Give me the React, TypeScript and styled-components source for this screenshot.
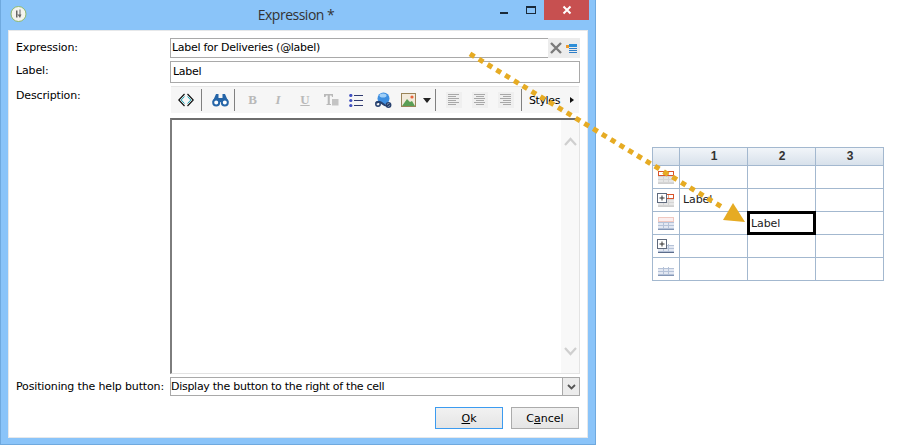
import React from "react";
import styled, { createGlobalStyle } from "styled-components";

const Global = createGlobalStyle`
  html, body { margin: 0; padding: 0; background: #fff; }
  body { font-family: "DejaVu Sans", "Noto Sans", sans-serif; font-size: 11px; color: #000; }
`;

const Page = styled.div`
  position: relative;
  width: 914px;
  height: 446px;
  display: flex;
  align-items: flex-start;
  overflow: hidden;
`;

const Window = styled.div`
  width: 596px;
  height: 445px;
  box-sizing: border-box;
  background: #8ac4f9;
  border: 1px solid #6fa9de;
  border-top: 0;
  display: flex;
  flex-direction: column;
  padding: 0 7px 7px 7px;
`;

const TitleBar = styled.div`
  height: 30px;
  flex: none;
  display: grid;
  grid-template-columns: 1fr auto 1fr;
  align-items: flex-start;
`;

const AppIcon = styled.div`
  width: 17px;
  height: 17px;
  margin: 6px 0 0 2px;
`;

const Title = styled.div`
  font-family: "Open Sans", sans-serif;
  font-size: 14px;
  letter-spacing: -0.5px;
  line-height: 30px;
  color: #333;
  position: relative;
  left: -2px;
`;

const Controls = styled.div`
  justify-self: end;
  margin-right: -1px;
  display: flex;
  align-items: flex-start;
`;

const Ctl = styled.div<{ $w: number }>`
  width: ${(p) => p.$w}px;
  height: 20px;
  display: flex;
  align-items: center;
  justify-content: center;
`;

const MinCtl = styled(Ctl)`
  align-items: flex-end;
  padding-bottom: 6px;
  box-sizing: border-box;
`;

const CloseCtl = styled(Ctl)`
  background: #c75050;
  margin-left: 3px;
`;

const Panel = styled.div`
  flex: 1;
  background: #fff;
  border: 1px solid #e6e8ea;
  display: grid;
  grid-template-columns: 161px 410px;
  grid-template-rows: 20px 22px 288px 19px 38px;
  row-gap: 3px;
  padding: 7px 0 0 0;
  box-sizing: border-box;
`;

const FieldLabel = styled.div`
  padding-left: 7px;
  line-height: 19px;
  white-space: nowrap;
  letter-spacing: -0.15px;
`;

const Inline = styled.div`
  display: flex;
`;

const Input = styled.div`
  flex: 1;
  height: 20px;
  box-sizing: border-box;
  border: 1px solid #a9a9a9;
  padding-left: 2px;
  line-height: 18px;
  white-space: nowrap;
  letter-spacing: -0.28px;
`;

const TopInput = styled(Input)`
  border-right: 0;
  padding-left: 1px;
`;

const LabelInput = styled(Input)`
  height: 22px;
  line-height: 19px;
`;

const FieldTools = styled.div`
  width: 32px;
  height: 20px;
  background: #ececec;
  display: flex;
  align-items: center;
  gap: 4px;
  padding-left: 2px;
  box-sizing: border-box;
`;

const EditorCol = styled.div`
  display: flex;
  flex-direction: column;
`;

const Toolbar = styled.div`
  height: 27px;
  margin: 0 0 5px 1px;
  padding-left: 1px;
  width: 408px;
  background: #f6f6f6;
  border-top: 1px solid #e6e6e6;
  box-sizing: border-box;
  display: flex;
  align-items: center;
`;

const Tool = styled.div<{ $w: number }>`
  width: ${(p) => p.$w}px;
  flex: none;
  height: 26px;
  display: flex;
  align-items: center;
  justify-content: center;
`;

const Sep = styled.div<{ $l: number; $r: number }>`
  width: 1px;
  height: 22px;
  flex: none;
  background: #808080;
  margin: 0 ${(p) => p.$r}px 0 ${(p) => p.$l}px;
`;

const StylesText = styled.div`
  width: 37px;
  flex: none;
  font-size: 11px;
  letter-spacing: -0.4px;
  white-space: nowrap;
`;

const Editor = styled.div`
  flex: 1;
  border-top: 2px solid #6d6d6d;
  border-left: 2px solid #7d7d7d;
  border-right: 1px solid #e3e3e3;
  border-bottom: 1px solid #e3e3e3;
  display: flex;
  justify-content: flex-end;
  box-sizing: border-box;
`;

const ScrollBar = styled.div`
  width: 18px;
  background: #f8f8f8;
  display: flex;
  flex-direction: column;
  justify-content: space-between;
  align-items: center;
  padding: 17px 0 17px;
  box-sizing: border-box;
`;

const Select = styled.div`
  height: 19px;
  box-sizing: border-box;
  border: 1px solid #a9a9a9;
  display: flex;
  align-items: center;
  white-space: nowrap;
  letter-spacing: -0.28px;
`;

const SelectText = styled.div`
  flex: 1;
`;

const SelectArrow = styled.div`
  width: 16px;
  height: 17px;
  background: #ececec;
  border-left: 1px solid #a9a9a9;
  display: flex;
  align-items: center;
  justify-content: center;
`;

const Actions = styled.div`
  grid-column: 2;
  display: flex;
  justify-content: flex-end;
  gap: 8px;
  padding: 8px 1px 0 0;
  align-items: flex-start;
`;

const Button = styled.div<{ $focus?: boolean }>`
  width: 68px;
  height: 22px;
  box-sizing: border-box;
  border: 1px solid ${(p) => (p.$focus ? "#3c9bf0" : "#ababab")};
  background: linear-gradient(#f1f1f1, #e5e5e5);
  text-align: center;
  line-height: 22px;
  u { text-underline-offset: 1px; }
`;

const Side = styled.div`
  margin: 147px 0 0 56px;
`;

const Sheet = styled.div`
  display: grid;
  grid-template-columns: 27px 68px 68px 68px;
  grid-template-rows: 18px repeat(5, 23px);
  border-left: 1px solid #a3b8cf;
  border-top: 1px solid #a3b8cf;
  width: 232px;
  box-sizing: border-box;
`;

const Cell = styled.div<{ $sel?: boolean }>`
  border-right: 1px solid #a3b8cf;
  border-bottom: 1px solid #a3b8cf;
  box-sizing: border-box;
  padding-left: 3px;
  line-height: 22px;
  color: #222;
  white-space: nowrap;
  letter-spacing: -0.1px;
  ${(p) => p.$sel && `
    border: 3px solid #000;
    margin: -1px 0 0 -1px;
    line-height: 19px;
    padding-left: 1px;
  `}
`;

const HeadCell = styled.div`
  border-right: 1px solid #a3b8cf;
  border-bottom: 1px solid #a3b8cf;
  background: linear-gradient(#f1f5f9, #d8e1eb);
  box-sizing: border-box;
  text-align: center;
  padding-left: 1px;
  line-height: 17px;
  font-weight: bold;
  font-size: 12px;
  font-family: "Liberation Sans", sans-serif;
  color: #333;
`;

const RowHead = styled(Cell)`
  padding: 0;
  display: flex;
  align-items: center;
  justify-content: center;
`;

const Overlay = styled.svg`
  position: absolute;
  left: 0;
  top: 0;
  pointer-events: none;
`;

const Tx = styled.span`
  font-family: "Liberation Serif", serif;
  font-size: 13px;
  font-weight: bold;
  color: #b9b9b9;
`;

const TxI = styled(Tx)`
  font-style: italic;
`;

const TxU = styled(Tx)`
  text-decoration: underline;
`;

const Align = ({ kind }: { kind: "l" | "c" | "r" }) => {
  const rows = [11, 8, 11, 8, 11, 8];
  return (
    <svg width="16" height="16" viewBox="0 0 16 16">
      <rect width="16" height="16" fill="#efefef" />
      {rows.map((w, i) => {
        const x = kind === "l" ? 2 : kind === "c" ? Math.floor(8 - w / 2) : 13 - w;
        return <rect key={i} x={x} y={2 + i * 2} width={w} height="1" fill="#a8a8a8" />;
      })}
    </svg>
  );
};

const GridIcon = ({ red, pink, plus, dark }: { red?: boolean; pink?: boolean; plus?: boolean; dark?: boolean }) => (
  <svg width="18" height="16" viewBox="0 0 18 16">
    <rect x="1" y="7" width="16" height="7" fill={red ? "#e6e6e6" : "#e3e8f2"} />
    {[7, 10, 13].map((y) => (
      <rect key={y} x="1" y={y} width="16" height="1" fill={red ? "#d5d5d5" : "#b5c2d8"} />
    ))}
    {[6, 11].map((x) => (
      <rect key={x} x={x} y="6" width="1" height="9" fill={red ? "#d5d5d5" : "#b5c2d8"} />
    ))}
    <rect x="1" y="14" width="16" height="1" fill={dark ? "#5c6d8c" : red ? "#cfcfcf" : "#8496b5"} />
    {red && (
      <>
        <rect x="1.500" y="2.500" width="15" height="4" fill="#fff" stroke="#d9542b" />
        <rect x="6" y="3" width="1" height="3" fill="#e8a48c" />
        <rect x="11" y="3" width="1" height="3" fill="#e8a48c" />
      </>
    )}
    {pink && <rect x="1.500" y="2.500" width="15" height="4" fill="#fbeeee" stroke="#f0c8c0" />}
    {plus && (
      <>
        <rect x="0.500" y="1.500" width="9" height="9" fill="#fff" stroke="#5f6a7d" />
        <rect x="2.500" y="5.500" width="5" height="1" fill="#333" />
        <rect x="4.500" y="3.500" width="1" height="5" fill="#333" />
      </>
    )}
  </svg>
);

export default function App() {
  return (
    <Page>
      <Global />
      <Window>
        <TitleBar>
          <AppIcon>
            <svg width="17" height="17" viewBox="0 0 17 17">
              <circle cx="8.500" cy="8" r="7.500" fill="#f4f4ee" stroke="#8fb86a" />
              <path d="M6 4.500v7h1.500v-7zM9.500 3.500v5h-2l2.500 3.500 1.500-3.500h-1v-5z" fill="#666" />
            </svg>
          </AppIcon>
          <Title>Expression *</Title>
          <Controls>
            <MinCtl $w={34}>
              <svg width="8" height="2" viewBox="0 0 8 2"><rect width="8" height="2" fill="#1a2a3a" /></svg>
            </MinCtl>
            <Ctl $w={20}>
              <svg width="10" height="8" viewBox="0 0 10 8"><rect x=".5" y=".5" width="9" height="7" fill="none" stroke="#1a2a3a" /><rect x="0" y="0" width="10" height="2" fill="#1a2a3a" /></svg>
            </Ctl>
            <CloseCtl $w={45}>
              <svg width="10" height="10" viewBox="0 0 10 10"><path d="M1.500 1.500l7 7M8.500 1.500l-7 7" stroke="#fff" strokeWidth="2" /></svg>
            </CloseCtl>
          </Controls>
        </TitleBar>
        <Panel>
          <FieldLabel>Expression:</FieldLabel>
          <Inline>
            <TopInput>Label for Deliveries (@label)</TopInput>
            <FieldTools>
              <svg width="12" height="12" viewBox="0 0 12 12"><path d="M1 1l10 10M11 1L1 11" stroke="#7b7b7b" strokeWidth="2.400" /></svg>
              <svg width="11" height="9" viewBox="0 0 11 9">
                <rect x="0" y="1" width="3" height="3" fill="#ee9a2c" />
                <rect x="3" y="0" width="8" height="3" fill="#2f8fd8" />
                <rect x="3" y="4" width="8" height="1" fill="#2f7fc8" />
                <rect x="3" y="6" width="8" height="1" fill="#2f7fc8" />
                <rect x="3" y="8" width="8" height="1" fill="#2f7fc8" />
              </svg>
            </FieldTools>
          </Inline>
          <FieldLabel>Label:</FieldLabel>
          <LabelInput>Label</LabelInput>
          <FieldLabel>Description:</FieldLabel>
          <EditorCol>
            <Toolbar>
              <Tool $w={27}>
                <svg width="16" height="14" viewBox="0 0 16 14">
                  <path d="M6.500 1L.8 7l5.700 6" fill="none" stroke="#111" strokeWidth="1.200" />
                  <path d="M9.500 1l5.700 6-5.700 6" fill="none" stroke="#111" strokeWidth="1.200" />
                  <path d="M6.500 3.500L3.200 7l3.300 3.500M9.500 3.500L12.800 7l-3.300 3.500" fill="none" stroke="#19a8b8" strokeWidth="1" />
                </svg>
              </Tool>
              <Sep $l={2} $r={5} />
              <Tool $w={27}>
                <svg width="17" height="14" viewBox="0 0 17 14">
                  <path d="M4 1h2.500v4h4V1H13l3.500 8H.5z" fill="#2565a8" />
                  <circle cx="4.200" cy="9.500" r="3" fill="#fff" stroke="#2565a8" strokeWidth="2" />
                  <circle cx="12.800" cy="9.500" r="3" fill="#fff" stroke="#2565a8" strokeWidth="2" />
                </svg>
              </Tool>
              <Sep $l={0} $r={5} />
              <Tool $w={25}><Tx>B</Tx></Tool>
              <Tool $w={26}><TxI>I</TxI></Tool>
              <Tool $w={28}><TxU>U</TxU></Tool>
              <Tool $w={24}>
                <svg width="15" height="14" viewBox="0 0 15 14">
                  <path d="M0 1h9v3H8L7.500 2.500H5.800V11H7v1H2.500v-1h1.200V2.500H2L1.500 4H0z" fill="#b9b9b9" />
                  <rect x="8" y="6" width="6.500" height="6.500" fill="#c4c4c4" />
                </svg>
              </Tool>
              <Tool $w={26}>
                <svg width="14" height="13" viewBox="0 0 14 13">
                  {[1.500, 6.500, 11.500].map((y) => (
                    <React.Fragment key={y}>
                      <circle cx="1.800" cy={y} r="1.600" fill="#4050c0" />
                      <rect x="5" y={y - 0.5} width="9" height="1" fill="#303a70" />
                    </React.Fragment>
                  ))}
                </svg>
              </Tool>
              <Tool $w={29}>
                <svg width="17" height="16" viewBox="0 0 17 16">
                  <circle cx="8.500" cy="6.500" r="6" fill="#3d8ee0" />
                  <ellipse cx="8" cy="3.500" rx="3.500" ry="2" fill="#a0d0f8" />
                  <path d="M1 11c2-2 5-1 7 1s5 2 7 0" fill="none" stroke="#26406e" strokeWidth="2" />
                  <circle cx="13.500" cy="13" r="2.200" fill="none" stroke="#26406e" strokeWidth="1.500" />
                  <circle cx="3" cy="12" r="2.200" fill="none" stroke="#26406e" strokeWidth="1.500" />
                </svg>
              </Tool>
              <Tool $w={20}>
                <svg width="15" height="14" viewBox="0 0 15 14">
                  <rect x=".5" y=".5" width="14" height="13" fill="#f2eadb" stroke="#9a8458" />
                  <path d="M1 13l5-7 3 3 2-1 3 5z" fill="#5a9e55" />
                  <circle cx="11" cy="4" r="1.600" fill="#e8643c" />
                </svg>
              </Tool>
              <Tool $w={17}>
                <svg width="8" height="5" viewBox="0 0 8 5"><path d="M0 0h8L4 5z" fill="#222" /></svg>
              </Tool>
              <Sep $l={0} $r={10} />
              <Tool $w={16}><Align kind="l" /></Tool>
              <Tool $w={10} />
              <Tool $w={16}><Align kind="c" /></Tool>
              <Tool $w={10} />
              <Tool $w={16}><Align kind="r" /></Tool>
              <Sep $l={7} $r={7} />
              <StylesText>Styles</StylesText>
              <Tool $w={11}>
                <svg width="4" height="6" viewBox="0 0 4 6"><path d="M0 0l4 3-4 3z" fill="#111" /></svg>
              </Tool>
            </Toolbar>
            <Editor>
              <ScrollBar>
                <svg width="13" height="9" viewBox="0 0 13 9"><path d="M1 8l5.500-6 5.500 6" fill="none" stroke="#cfcfcf" strokeWidth="2.200" /></svg>
                <svg width="13" height="9" viewBox="0 0 13 9"><path d="M1 1l5.500 6 5.500-6" fill="none" stroke="#cfcfcf" strokeWidth="2.200" /></svg>
              </ScrollBar>
            </Editor>
          </EditorCol>
          <FieldLabel>Positioning the help button:</FieldLabel>
          <Select>
            <SelectText>Display the button to the right of the cell</SelectText>
            <SelectArrow>
              <svg width="9" height="6" viewBox="0 0 9 6"><path d="M1 1l3.500 3.500L8 1" fill="none" stroke="#555" strokeWidth="1.800" /></svg>
            </SelectArrow>
          </Select>
          <Actions>
            <Button $focus><u>O</u>k</Button>
            <Button>C<u>a</u>ncel</Button>
          </Actions>
        </Panel>
      </Window>
      <Side>
        <Sheet>
          <HeadCell />
          <HeadCell>1</HeadCell>
          <HeadCell>2</HeadCell>
          <HeadCell>3</HeadCell>
          <RowHead><GridIcon red /></RowHead>
          <Cell /><Cell /><Cell />
          <RowHead><GridIcon red plus /></RowHead>
          <Cell>Label</Cell><Cell /><Cell />
          <RowHead><GridIcon pink /></RowHead>
          <Cell /><Cell $sel>Label</Cell><Cell />
          <RowHead><GridIcon plus dark /></RowHead>
          <Cell /><Cell /><Cell />
          <RowHead><GridIcon /></RowHead>
          <Cell /><Cell /><Cell />
        </Sheet>
      </Side>
      <Overlay width="914" height="446" viewBox="0 0 914 446">
        <line x1="470" y1="53.800" x2="724" y2="208.300" stroke="#e6ab23" strokeWidth="5" strokeDasharray="5.300 5" />
        <polygon points="733,203 723,220 745,222" fill="#e6ab23" />
      </Overlay>
    </Page>
  );
}
